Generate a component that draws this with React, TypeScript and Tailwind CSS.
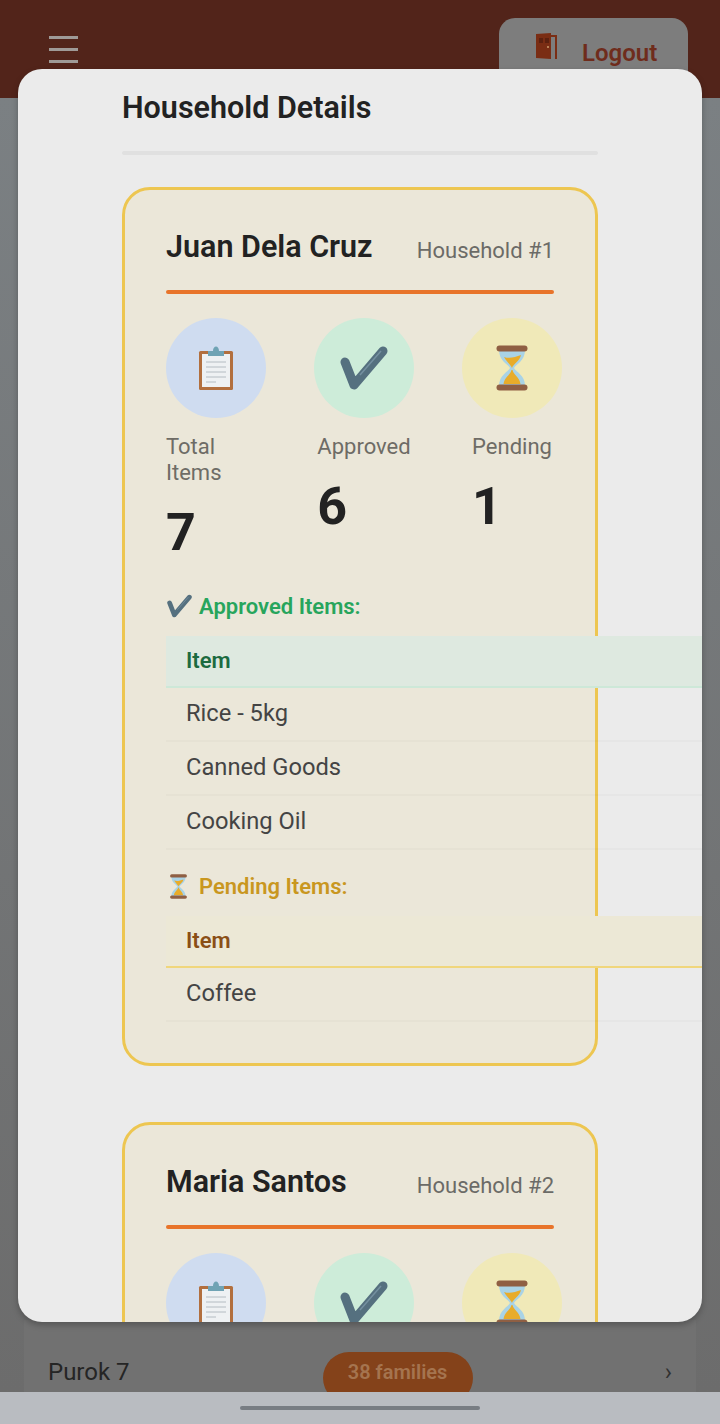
const FONT = "font-['Roboto',sans-serif]";

const households = [
  {
    name: "Juan Dela Cruz",
    number: 1,
    total: 7,
    approvedCount: 6,
    approved: ["Rice - 5kg", "Canned Goods", "Cooking Oil"],
    pending: ["Coffee"],
  },
  {
    name: "Maria Santos",
    number: 2,
    total: 5,
    approvedCount: 4,
    approved: ["Rice - 5kg", "Sugar"],
    pending: ["Milk"],
  },
];

function ClipboardIcon({ className }: { className: string }) {
  return (
    <svg viewBox="0 0 36 46" className={className}>
      <rect x="1" y="6" width="34" height="39" rx="1.500" fill="#b26f3e" />
      <rect x="4" y="9" width="28" height="33" fill="#eef1f3" />
      <path d="M8 17h20M8 22h20M8 27h20M8 32h20M8 37h10" stroke="#b4bcc2" strokeWidth="1" />
      <path d="M10 11V6h5c0-6 6-6 6 0h5v5z" fill="#6fa3b4" />
    </svg>
  );
}

function CheckIcon({ className }: { className: string }) {
  return (
    <svg viewBox="0 0 48 46" className={className}>
      <path d="M5 17 L14 40 L43 6" fill="none" stroke="#55707f" strokeWidth="9" strokeLinecap="round" strokeLinejoin="round" />
      <path d="M20 30 L41 6" fill="none" stroke="#7590a0" strokeWidth="1.500" />
    </svg>
  );
}

function HourglassIcon({ className }: { className: string }) {
  return (
    <svg viewBox="0 0 32 46" className={className}>
      <path d="M3 5h26c0 11-9 14-11 18 2 4 11 7 11 18H3c0-11 9-14 11-18C12 19 3 16 3 5z" fill="#a9d3e6" />
      <path d="M8 12c6 2 11 0 17-2-1 6-8 9-9 13-1-3-6-7-8-11z" fill="#e8ac2a" />
      <path d="M15.500 25h1c1 5 7 7 8 14H7.500c1-7 7-9 8-14z" fill="#e8ac2a" />
      <rect x="0.500" y="0.500" width="31" height="6" rx="3" fill="#8f5f43" />
      <rect x="0.500" y="39.500" width="31" height="6" rx="3" fill="#8f5f43" />
    </svg>
  );
}

function DoorIcon() {
  return (
    <svg viewBox="0 0 22 26" className="h-[26px] w-[22px]">
      <path d="M0 1L15 0V26L0 25z" fill="#7a2d14" />
      <path d="M15 2h6v24h-2V4h-4z" fill="#7a2d14" />
      <path d="M3 5h4v5H3zM9 5h4v5H9z" fill="#5c2110" />
      <rect x="11" y="13" width="2" height="2" fill="#b98257" />
    </svg>
  );
}

function Stat({ tint, icon, label, value }: { tint: string; icon: React.ReactNode; label: string; value: number }) {
  return (
    <div className="flex w-[100px] shrink-0 flex-col">
      <div className={`flex h-[100px] w-[100px] items-center justify-center rounded-full ${tint}`}>{icon}</div>
      <div className="mt-4 w-fit self-center">
        <div className="text-[22px] leading-[26px] text-[#6e6c66]">{label}</div>
        <div className="mt-[17px] text-[52px] leading-[60px] font-bold text-[#222222]">{value}</div>
      </div>
    </div>
  );
}

function ItemTable({ head, headText, line, items }: { head: string; headText: string; line: string; items: string[] }) {
  return (
    <div className="w-[536px]">
      <div className={`flex h-[52px] items-center border-b-2 pb-[2px] pl-5 text-[22px] font-semibold ${head} ${headText} ${line}`}>
        Item
      </div>
      {items.map((item) => (
        <div key={item} className="flex h-[54px] items-center border-b-2 border-[#00000005] pl-5 text-[23.7px] text-[#444444]">
          {item}
        </div>
      ))}
    </div>
  );
}

function HouseholdCard({ household }: { household: (typeof households)[number] }) {
  return (
    <div className="box-border h-[879px] w-[476px] shrink-0 rounded-[28px] border-[3px] border-[#edc651] bg-[#ebe7d9] px-[41px] pt-[36px]">
      <div className="flex h-[48px] items-center justify-between pb-[6px]">
        <span className="text-[30.5px] font-semibold text-[#222222]">{household.name}</span>
        <span className="pt-[6px] text-[22px] text-[#6b6b67]">Household #{household.number}</span>
      </div>
      <div className="mt-[16px] h-1 rounded-full bg-[#e8742a]" />
      <div className="mt-[24px] flex h-[267px] gap-12">
        <Stat tint="bg-[#cfdcf0]" icon={<ClipboardIcon className="h-[46px] w-[36px]" />} label="Total Items" value={household.total} />
        <Stat tint="bg-[#cdecd9]" icon={<CheckIcon className="h-[46px] w-[48px]" />} label="Approved" value={household.approvedCount} />
        <Stat tint="bg-[#f0e9b8]" icon={<HourglassIcon className="h-[46px] w-[32px]" />} label="Pending" value={household.pending.length} />
      </div>
      <div className="flex h-[42px] items-center gap-[7px] pl-[1px] text-[22px] font-semibold text-[#27a55c]">
        <CheckIcon className="h-[24px] w-[25px]" />
        Approved Items:
      </div>
      <div className="mt-[9px]">
        <ItemTable head="bg-[#dee9e0]" headText="text-[#1c6b40]" line="border-[#cde8d8]" items={household.approved} />
      </div>
      <div className="mt-[15px] flex h-[42px] items-center gap-[10px] pl-[2px] text-[22px] font-semibold text-[#c9971f]">
        <HourglassIcon className="h-[25px] w-[21px]" />
        Pending Items:
      </div>
      <div className="mt-[9px]">
        <ItemTable head="bg-[#ece8d6]" headText="text-[#8a4f16]" line="border-[#f0d67c]" items={household.pending} />
      </div>
    </div>
  );
}

export default function App() {
  return (
    <div className={`relative flex h-[1424px] w-[720px] flex-col overflow-hidden bg-[#6e6e6e] ${FONT}`}>
      <header className="flex h-[98px] shrink-0 items-start justify-between overflow-hidden bg-[#52241a] pr-8 pl-[49px]">
        <div className="mt-[36px] flex w-[29px] flex-col gap-[9px]">
          <span className="h-[3px] bg-[#9f9a97]" />
          <span className="h-[3px] bg-[#9f9a97]" />
          <span className="h-[3px] bg-[#9f9a97]" />
        </div>
        <div className="mt-[18px] flex h-[80px] w-[189px] items-start gap-6 rounded-2xl bg-[#7d7d7d] pt-[15px] pl-[37px] text-[24px] font-semibold text-[#6f2c1c]">
          <DoorIcon />
          <span className="mt-[5px] leading-[30px]">Logout</span>
        </div>
      </header>

      <main className="flex flex-1 flex-col justify-end bg-gradient-to-b from-[#7b8083] to-[#6c6c6c] px-6">
        <div className="flex h-[72px] items-start bg-[#717171] pt-[32px] pr-6 pl-6">
          <span className="text-[24px] leading-[40px] text-[#252525]">Purok 7</span>
          <span className="ml-[193px] flex h-[52px] w-[150px] items-start justify-center rounded-full bg-[#84421a] pt-[8px] text-[20px] leading-[24px] font-semibold text-[#a5744f]">
            38 families
          </span>
          <span className="ml-auto text-[24px] leading-[40px] text-[#303030]">›</span>
        </div>
      </main>

      <nav className="z-10 flex h-8 shrink-0 items-center justify-center bg-[#b9bcc1]">
        <span className="h-1 w-60 rounded-full bg-[#787d83]" />
      </nav>

      <section className="absolute top-[69px] left-[18px] z-20 flex h-[1253px] w-[684px] flex-col overflow-hidden rounded-[24px] bg-[#ebebeb] pl-[104px] shadow-[0_3px_6px_rgba(0,0,0,0.25)]">
        <h2 className="mt-[20px] text-[30.5px] leading-[38px] font-semibold text-[#222222]">Household Details</h2>
        <div className="mt-[24px] h-1 w-[476px] shrink-0 rounded-full bg-[#e0e0e0]" />
        <div className="mt-[32px] flex flex-col gap-[56px]">
          {households.map((household) => (
            <HouseholdCard key={household.number} household={household} />
          ))}
        </div>
      </section>
    </div>
  );
}
